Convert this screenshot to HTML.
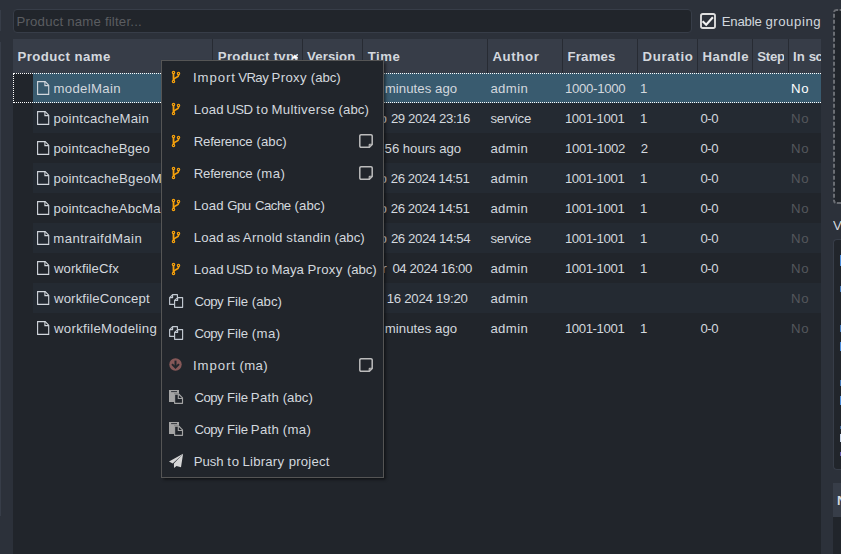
<!DOCTYPE html>
<html><head><meta charset="utf-8"><title>Loader</title>
<style>
html,body{margin:0;padding:0;overflow:hidden}
body{width:841px;height:554px;overflow:hidden;background:#2c313a;position:relative;font-family:"Liberation Sans",sans-serif;font-size:13.2px;color:#d3d8de}
div,span,svg{position:absolute;box-sizing:border-box}
.t{white-space:pre;color:#d3d8de}
.h{font-weight:700;color:#d3d8de}
.dis{color:#54575c}
.sel{color:#ffffff}
.ph{color:#5b5d61}
.m{color:#d3d8de}
#view{left:13px;top:39px;width:808px;height:515px;background:#21252b}
#hdr{left:13px;top:39px;width:808px;height:34px;background:#373d48}
.hs{top:39px;width:1px;height:34px;background:#272b33}
.ralt{left:33px;width:788px;height:30px;background:#242a32}
.rsel{left:33px;width:788px;height:30px;background:#395b6f}
#focus{left:13px;top:73px;width:808px;height:30px;border:1px dotted #ffffff;border-right:none}
#filter{left:13px;top:9px;width:679px;height:24px;background:#21252b;border:1px solid #373d48;border-radius:4px}
#menu{left:161px;top:60px;width:223px;height:418px;background:#21252b;border:1px solid #555555;box-shadow:1.5px 1.5px 3px rgba(0,0,0,.55)}
#ls1{left:0;top:10px;width:1px;height:21px;background:#373d48}
#ls2{left:0;top:42px;width:1px;height:474px;background:#373d48}
#rp2{left:833px;top:239px;width:8px;height:231px;background:#21252b;border:1px solid #373d48;border-right:none;border-radius:4px 0 0 4px}
#rp3{left:833px;top:483px;width:8px;height:34px;background:#373d48}
#rp4{left:833px;top:517px;width:8px;height:37px;background:#21252b}
.bl{left:840px;width:1px;background:#4f8fdc}
</style></head><body>
<div id="ls1"></div><div id="ls2"></div>
<div id="filter"></div>
<svg style="left:700px;top:13px" width="16" height="16" viewBox="0 0 16 16"><rect x="1" y="1" width="14" height="14" rx="1.8" fill="none" stroke="#e0e0e0" stroke-width="1.85"/><path d="M2.6 8.3L6.2 11.7 12.9 4.3" fill="none" stroke="#f2f2f2" stroke-width="2.2"/></svg>
<div id="view"></div>
<div class="rsel" style="top:73px"></div><div class="ralt" style="top:103px"></div><div class="ralt" style="top:163px"></div><div class="ralt" style="top:223px"></div><div class="ralt" style="top:283px"></div>
<div id="focus"></div>
<div id="hdr"></div><div class="hs" style="left:212px"></div><div class="hs" style="left:302px"></div><div class="hs" style="left:362px"></div><div class="hs" style="left:487px"></div><div class="hs" style="left:562px"></div><div class="hs" style="left:637px"></div><div class="hs" style="left:697px"></div><div class="hs" style="left:752px"></div><div class="hs" style="left:788px"></div>
<span class="t h" style="left:17.50px;top:39.73px;line-height:34px;letter-spacing:0.445px;">Product name</span><span class="t h" style="left:217.80px;top:39.73px;line-height:34px;letter-spacing:0.299px;width:80.20px;height:34px;overflow:hidden;">Product type</span><span class="t h" style="left:307.10px;top:39.73px;line-height:34px;letter-spacing:0.085px;">Version</span><span class="t h" style="left:367.80px;top:39.73px;line-height:34px;letter-spacing:0.464px;">Time</span><span class="t h" style="left:492.40px;top:39.73px;line-height:34px;letter-spacing:0.644px;">Author</span><span class="t h" style="left:567.50px;top:39.73px;line-height:34px;letter-spacing:0.204px;">Frames</span><span class="t h" style="left:642.40px;top:39.73px;line-height:34px;letter-spacing:0.717px;width:51.00px;height:34px;overflow:hidden;">Duration</span><span class="t h" style="left:702.50px;top:39.73px;line-height:34px;letter-spacing:0.413px;">Handle</span><span class="t h" style="left:757.30px;top:39.73px;line-height:34px;letter-spacing:-0.241px;width:26.70px;height:34px;overflow:hidden;">Step</span><span class="t h" style="left:792.90px;top:39.73px;line-height:34px;letter-spacing:0.236px;">In</span><span class="t h" style="left:808.80px;top:39.73px;line-height:34px;letter-spacing:-0.534px;width:12.20px;height:34px;overflow:hidden;">scene</span>
<svg style="left:291px;top:54px" width="8" height="5" viewBox="0 0 8 5"><path d="M0.6 4.4L3.8 0.6 7 4.4z" fill="#ffffff"/></svg>
<svg class="ic" style="left:37px;top:81px" width="13" height="15" viewBox="0 0 13 15"><g fill="none" stroke="#d3d8de" stroke-width="1.1" stroke-linejoin="miter"><path d="M0.6 0.65h7.6l3.5 3.5v9.2H0.6z"/><path d="M7.9 0.65v4h3.8"/></g></svg><svg class="ic" style="left:37px;top:111px" width="13" height="15" viewBox="0 0 13 15"><g fill="none" stroke="#d3d8de" stroke-width="1.1" stroke-linejoin="miter"><path d="M0.6 0.65h7.6l3.5 3.5v9.2H0.6z"/><path d="M7.9 0.65v4h3.8"/></g></svg><svg class="ic" style="left:37px;top:141px" width="13" height="15" viewBox="0 0 13 15"><g fill="none" stroke="#d3d8de" stroke-width="1.1" stroke-linejoin="miter"><path d="M0.6 0.65h7.6l3.5 3.5v9.2H0.6z"/><path d="M7.9 0.65v4h3.8"/></g></svg><svg class="ic" style="left:37px;top:171px" width="13" height="15" viewBox="0 0 13 15"><g fill="none" stroke="#d3d8de" stroke-width="1.1" stroke-linejoin="miter"><path d="M0.6 0.65h7.6l3.5 3.5v9.2H0.6z"/><path d="M7.9 0.65v4h3.8"/></g></svg><svg class="ic" style="left:37px;top:201px" width="13" height="15" viewBox="0 0 13 15"><g fill="none" stroke="#d3d8de" stroke-width="1.1" stroke-linejoin="miter"><path d="M0.6 0.65h7.6l3.5 3.5v9.2H0.6z"/><path d="M7.9 0.65v4h3.8"/></g></svg><svg class="ic" style="left:37px;top:231px" width="13" height="15" viewBox="0 0 13 15"><g fill="none" stroke="#d3d8de" stroke-width="1.1" stroke-linejoin="miter"><path d="M0.6 0.65h7.6l3.5 3.5v9.2H0.6z"/><path d="M7.9 0.65v4h3.8"/></g></svg><svg class="ic" style="left:37px;top:261px" width="13" height="15" viewBox="0 0 13 15"><g fill="none" stroke="#d3d8de" stroke-width="1.1" stroke-linejoin="miter"><path d="M0.6 0.65h7.6l3.5 3.5v9.2H0.6z"/><path d="M7.9 0.65v4h3.8"/></g></svg><svg class="ic" style="left:37px;top:291px" width="13" height="15" viewBox="0 0 13 15"><g fill="none" stroke="#d3d8de" stroke-width="1.1" stroke-linejoin="miter"><path d="M0.6 0.65h7.6l3.5 3.5v9.2H0.6z"/><path d="M7.9 0.65v4h3.8"/></g></svg><svg class="ic" style="left:37px;top:321px" width="13" height="15" viewBox="0 0 13 15"><g fill="none" stroke="#d3d8de" stroke-width="1.1" stroke-linejoin="miter"><path d="M0.6 0.65h7.6l3.5 3.5v9.2H0.6z"/><path d="M7.9 0.65v4h3.8"/></g></svg>
<span class="t n" style="left:53.40px;top:73.73px;line-height:30px;letter-spacing:0.342px;">modelMain</span><span class="t" style="left:384.80px;top:73.73px;line-height:30px;letter-spacing:0.049px;">minutes ago</span><span class="t" style="left:490.40px;top:73.73px;line-height:30px;letter-spacing:0.379px;">admin</span><span class="t" style="left:564.90px;top:73.73px;line-height:30px;letter-spacing:-0.291px;">1000-1000</span><span class="t" style="left:639.90px;top:73.73px;line-height:30px;">1</span><span class="t sel" style="left:790.89px;top:73.73px;line-height:30px;letter-spacing:0.9px;">No</span><span class="t n" style="left:53.40px;top:103.73px;line-height:30px;letter-spacing:0.228px;">pointcacheMain</span><span class="t" style="left:390.90px;top:103.73px;line-height:30px;letter-spacing:-0.4px;">29 2024 23:16</span><span class="t" style="left:364.01px;top:103.73px;line-height:30px;">Feb</span><span class="t" style="left:490.40px;top:103.73px;line-height:30px;letter-spacing:-0.156px;">service</span><span class="t" style="left:564.90px;top:103.73px;line-height:30px;letter-spacing:-0.404px;">1001-1001</span><span class="t" style="left:639.90px;top:103.73px;line-height:30px;">1</span><span class="t" style="left:700.59px;top:103.73px;line-height:30px;letter-spacing:-0.55px;">0-0</span><span class="t dis" style="left:790.89px;top:103.73px;line-height:30px;letter-spacing:0.9px;">No</span><span class="t n" style="left:53.40px;top:133.73px;line-height:30px;letter-spacing:0.15px;">pointcacheBgeo</span><span class="t" style="left:384.60px;top:133.73px;line-height:30px;letter-spacing:-0.041px;">56 hours ago</span><span class="t" style="left:490.40px;top:133.73px;line-height:30px;letter-spacing:0.379px;">admin</span><span class="t" style="left:564.90px;top:133.73px;line-height:30px;letter-spacing:-0.316px;">1001-1002</span><span class="t" style="left:640.70px;top:133.73px;line-height:30px;">2</span><span class="t" style="left:700.59px;top:133.73px;line-height:30px;letter-spacing:-0.55px;">0-0</span><span class="t dis" style="left:790.89px;top:133.73px;line-height:30px;letter-spacing:0.9px;">No</span><span class="t n" style="left:53.40px;top:163.73px;line-height:30px;letter-spacing:0.194px;width:107.20px;height:30px;overflow:hidden;">pointcacheBgeoMain</span><span class="t" style="left:390.80px;top:163.73px;line-height:30px;letter-spacing:-0.45px;">26 2024 14:51</span><span class="t" style="left:364.01px;top:163.73px;line-height:30px;">Feb</span><span class="t" style="left:490.40px;top:163.73px;line-height:30px;letter-spacing:0.379px;">admin</span><span class="t" style="left:564.90px;top:163.73px;line-height:30px;letter-spacing:-0.404px;">1001-1001</span><span class="t" style="left:639.90px;top:163.73px;line-height:30px;">1</span><span class="t" style="left:700.59px;top:163.73px;line-height:30px;letter-spacing:-0.55px;">0-0</span><span class="t dis" style="left:790.89px;top:163.73px;line-height:30px;letter-spacing:0.9px;">No</span><span class="t n" style="left:53.40px;top:193.73px;line-height:30px;letter-spacing:0.161px;width:107.20px;height:30px;overflow:hidden;">pointcacheAbcMain</span><span class="t" style="left:390.80px;top:193.73px;line-height:30px;letter-spacing:-0.45px;">26 2024 14:51</span><span class="t" style="left:364.01px;top:193.73px;line-height:30px;">Feb</span><span class="t" style="left:490.40px;top:193.73px;line-height:30px;letter-spacing:0.379px;">admin</span><span class="t" style="left:564.90px;top:193.73px;line-height:30px;letter-spacing:-0.404px;">1001-1001</span><span class="t" style="left:639.90px;top:193.73px;line-height:30px;">1</span><span class="t" style="left:700.59px;top:193.73px;line-height:30px;letter-spacing:-0.55px;">0-0</span><span class="t dis" style="left:790.89px;top:193.73px;line-height:30px;letter-spacing:0.9px;">No</span><span class="t n" style="left:53.30px;top:223.73px;line-height:30px;letter-spacing:0.407px;">mantraifdMain</span><span class="t" style="left:390.90px;top:223.73px;line-height:30px;letter-spacing:-0.392px;">26 2024 14:54</span><span class="t" style="left:364.01px;top:223.73px;line-height:30px;">Feb</span><span class="t" style="left:490.40px;top:223.73px;line-height:30px;letter-spacing:-0.156px;">service</span><span class="t" style="left:564.90px;top:223.73px;line-height:30px;letter-spacing:-0.404px;">1001-1001</span><span class="t" style="left:639.90px;top:223.73px;line-height:30px;">1</span><span class="t" style="left:700.59px;top:223.73px;line-height:30px;letter-spacing:-0.55px;">0-0</span><span class="t dis" style="left:790.89px;top:223.73px;line-height:30px;letter-spacing:0.9px;">No</span><span class="t n" style="left:54.00px;top:253.73px;line-height:30px;letter-spacing:0.031px;">workfileCfx</span><span class="t" style="left:392.40px;top:253.73px;line-height:30px;letter-spacing:-0.367px;">04 2024 16:00</span><span class="t" style="left:363.88px;top:253.73px;line-height:30px;">Mar</span><span class="t" style="left:490.40px;top:253.73px;line-height:30px;letter-spacing:0.379px;">admin</span><span class="t" style="left:564.90px;top:253.73px;line-height:30px;letter-spacing:-0.404px;">1001-1001</span><span class="t" style="left:639.90px;top:253.73px;line-height:30px;">1</span><span class="t" style="left:700.59px;top:253.73px;line-height:30px;letter-spacing:-0.55px;">0-0</span><span class="t dis" style="left:790.89px;top:253.73px;line-height:30px;letter-spacing:0.9px;">No</span><span class="t n" style="left:54.00px;top:283.73px;line-height:30px;letter-spacing:0.132px;">workfileConcept</span><span class="t" style="left:386.80px;top:283.73px;line-height:30px;letter-spacing:-0.275px;">16 2024 19:20</span><span class="t" style="left:490.40px;top:283.73px;line-height:30px;letter-spacing:0.379px;">admin</span><span class="t dis" style="left:790.89px;top:283.73px;line-height:30px;letter-spacing:0.9px;">No</span><span class="t n" style="left:54.00px;top:313.73px;line-height:30px;letter-spacing:0.301px;">workfileModeling</span><span class="t" style="left:384.80px;top:313.73px;line-height:30px;letter-spacing:0.049px;">minutes ago</span><span class="t" style="left:490.40px;top:313.73px;line-height:30px;letter-spacing:0.379px;">admin</span><span class="t" style="left:564.90px;top:313.73px;line-height:30px;letter-spacing:-0.404px;">1001-1001</span><span class="t" style="left:639.90px;top:313.73px;line-height:30px;">1</span><span class="t" style="left:700.59px;top:313.73px;line-height:30px;letter-spacing:-0.55px;">0-0</span><span class="t dis" style="left:790.89px;top:313.73px;line-height:30px;letter-spacing:0.9px;">No</span><span class="t ph" style="left:16.50px;top:9.73px;line-height:24px;letter-spacing:0.201px;">Product name filter...</span><span class="t" style="left:721.80px;top:9.73px;line-height:24px;letter-spacing:-0.226px;">Enable</span><span class="t" style="left:765.40px;top:9.73px;line-height:24px;letter-spacing:0.558px;">grouping</span>
<svg style="left:833px;top:9px" width="8" height="195" viewBox="833 9 8 195"><rect x="834" y="10" width="20" height="193" rx="3" fill="#21252b"/><g fill="none" stroke="#6a6d73" stroke-width="2"><path d="M834 13.8V198.6" stroke-dasharray="4 2"/><path d="M838.2 10H836.6A2.6 2.6 0 0 0 834 12"/><path d="M839.6 10H842"/><path d="M834 199.8V200.6A2.4 2.4 0 0 0 835.4 202.8"/><path d="M836.8 203H842"/></g></svg><div id="rp2"></div><div id="rp3"></div><div id="rp4"></div>
<span class="t" style="left:833px;top:214px;line-height:24px;width:8px;height:24px;overflow:hidden">V</span>
<span class="t h" style="left:837px;top:483.7px;line-height:34px;width:4px;height:34px;overflow:hidden">N</span><div class="bl" style="top:255px;height:11px"></div><div class="bl" style="top:286px;height:6px;opacity:.8"></div><div class="bl" style="top:325px;height:7px;opacity:.8"></div><div class="bl" style="top:342px;height:9px"></div><div class="bl" style="top:380px;height:6px;opacity:.8"></div><div class="bl" style="top:396px;height:9px"></div><div class="bl" style="top:426px;height:3px;opacity:.6"></div><div class="bl" style="top:434px;height:8px;background:#c8d4e6"></div><div class="bl" style="top:452px;height:4px;background:#6a5fb0"></div>
<div id="menu"></div>
<svg class="ic" style="left:170px;top:70px" width="12" height="14" viewBox="0 0 12 14"><g fill="none" stroke="#f6a10c" stroke-width="1.5"><path d="M3.5 3.2v7.4" stroke-width="1.8"/><path d="M8.5 4.4v1.1c0 2.3-4.3 1.8-4.9 4.2" stroke-width="1.7"/><circle cx="3.5" cy="2.4" r="1.15" stroke-width="1.25"/><circle cx="8.5" cy="3.5" r="1.15" stroke-width="1.25"/><circle cx="3.5" cy="11.5" r="1.15" stroke-width="1.25"/></g></svg><svg class="ic" style="left:170px;top:102px" width="12" height="14" viewBox="0 0 12 14"><g fill="none" stroke="#f6a10c" stroke-width="1.5"><path d="M3.5 3.2v7.4" stroke-width="1.8"/><path d="M8.5 4.4v1.1c0 2.3-4.3 1.8-4.9 4.2" stroke-width="1.7"/><circle cx="3.5" cy="2.4" r="1.15" stroke-width="1.25"/><circle cx="8.5" cy="3.5" r="1.15" stroke-width="1.25"/><circle cx="3.5" cy="11.5" r="1.15" stroke-width="1.25"/></g></svg><svg class="ic" style="left:170px;top:134px" width="12" height="14" viewBox="0 0 12 14"><g fill="none" stroke="#f6a10c" stroke-width="1.5"><path d="M3.5 3.2v7.4" stroke-width="1.8"/><path d="M8.5 4.4v1.1c0 2.3-4.3 1.8-4.9 4.2" stroke-width="1.7"/><circle cx="3.5" cy="2.4" r="1.15" stroke-width="1.25"/><circle cx="8.5" cy="3.5" r="1.15" stroke-width="1.25"/><circle cx="3.5" cy="11.5" r="1.15" stroke-width="1.25"/></g></svg><svg class="ic" style="left:359px;top:134px" width="15" height="15" viewBox="0 0 15 15"><g fill="none" stroke="#bcbcbc" stroke-width="1.5" stroke-linejoin="round"><path d="M2 0.8h10a1.2 1.2 0 0 1 1.2 1.2v8.4l-2.8 2.8H2a1.2 1.2 0 0 1-1.2-1.2V2a1.2 1.2 0 0 1 1.2-1.2z"/><path d="M13.2 10.2h-2.4a0.6 0.6 0 0 0-0.6 0.6v2.4" stroke-width="1.1"/></g></svg><svg class="ic" style="left:170px;top:166px" width="12" height="14" viewBox="0 0 12 14"><g fill="none" stroke="#f6a10c" stroke-width="1.5"><path d="M3.5 3.2v7.4" stroke-width="1.8"/><path d="M8.5 4.4v1.1c0 2.3-4.3 1.8-4.9 4.2" stroke-width="1.7"/><circle cx="3.5" cy="2.4" r="1.15" stroke-width="1.25"/><circle cx="8.5" cy="3.5" r="1.15" stroke-width="1.25"/><circle cx="3.5" cy="11.5" r="1.15" stroke-width="1.25"/></g></svg><svg class="ic" style="left:359px;top:166px" width="15" height="15" viewBox="0 0 15 15"><g fill="none" stroke="#bcbcbc" stroke-width="1.5" stroke-linejoin="round"><path d="M2 0.8h10a1.2 1.2 0 0 1 1.2 1.2v8.4l-2.8 2.8H2a1.2 1.2 0 0 1-1.2-1.2V2a1.2 1.2 0 0 1 1.2-1.2z"/><path d="M13.2 10.2h-2.4a0.6 0.6 0 0 0-0.6 0.6v2.4" stroke-width="1.1"/></g></svg><svg class="ic" style="left:170px;top:198px" width="12" height="14" viewBox="0 0 12 14"><g fill="none" stroke="#f6a10c" stroke-width="1.5"><path d="M3.5 3.2v7.4" stroke-width="1.8"/><path d="M8.5 4.4v1.1c0 2.3-4.3 1.8-4.9 4.2" stroke-width="1.7"/><circle cx="3.5" cy="2.4" r="1.15" stroke-width="1.25"/><circle cx="8.5" cy="3.5" r="1.15" stroke-width="1.25"/><circle cx="3.5" cy="11.5" r="1.15" stroke-width="1.25"/></g></svg><svg class="ic" style="left:170px;top:230px" width="12" height="14" viewBox="0 0 12 14"><g fill="none" stroke="#f6a10c" stroke-width="1.5"><path d="M3.5 3.2v7.4" stroke-width="1.8"/><path d="M8.5 4.4v1.1c0 2.3-4.3 1.8-4.9 4.2" stroke-width="1.7"/><circle cx="3.5" cy="2.4" r="1.15" stroke-width="1.25"/><circle cx="8.5" cy="3.5" r="1.15" stroke-width="1.25"/><circle cx="3.5" cy="11.5" r="1.15" stroke-width="1.25"/></g></svg><svg class="ic" style="left:170px;top:262px" width="12" height="14" viewBox="0 0 12 14"><g fill="none" stroke="#f6a10c" stroke-width="1.5"><path d="M3.5 3.2v7.4" stroke-width="1.8"/><path d="M8.5 4.4v1.1c0 2.3-4.3 1.8-4.9 4.2" stroke-width="1.7"/><circle cx="3.5" cy="2.4" r="1.15" stroke-width="1.25"/><circle cx="8.5" cy="3.5" r="1.15" stroke-width="1.25"/><circle cx="3.5" cy="11.5" r="1.15" stroke-width="1.25"/></g></svg><svg class="ic" style="left:169px;top:294px" width="15" height="15" viewBox="0 0 15 15"><g fill="none" stroke="#c3cad2" stroke-width="1.15" stroke-linejoin="round"><path d="M8.4 3.2V0.65H3.6L0.65 3.6v6.8h4.5"/><path d="M3.6 0.65v2.95H0.65"/><path d="M5.6 6.4L8.6 3.55h5v9.8H5.6z"/><path d="M8.6 3.55v2.85H5.6"/></g></svg><svg class="ic" style="left:169px;top:326px" width="15" height="15" viewBox="0 0 15 15"><g fill="none" stroke="#c3cad2" stroke-width="1.15" stroke-linejoin="round"><path d="M8.4 3.2V0.65H3.6L0.65 3.6v6.8h4.5"/><path d="M3.6 0.65v2.95H0.65"/><path d="M5.6 6.4L8.6 3.55h5v9.8H5.6z"/><path d="M8.6 3.55v2.85H5.6"/></g></svg><svg class="ic" style="left:169px;top:358px" width="13" height="13" viewBox="-6.5 -6.5 13 13"><circle cx="0" cy="0" r="6.2" fill="#865858"/><g fill="none" stroke="#21252b" stroke-width="2"><path d="M0-3.9V2.4"/><path d="M-3.5-0.4L0 3.1 3.5-0.4"/></g></svg><svg class="ic" style="left:359px;top:358px" width="15" height="15" viewBox="0 0 15 15"><g fill="none" stroke="#bcbcbc" stroke-width="1.5" stroke-linejoin="round"><path d="M2 0.8h10a1.2 1.2 0 0 1 1.2 1.2v8.4l-2.8 2.8H2a1.2 1.2 0 0 1-1.2-1.2V2a1.2 1.2 0 0 1 1.2-1.2z"/><path d="M13.2 10.2h-2.4a0.6 0.6 0 0 0-0.6 0.6v2.4" stroke-width="1.1"/></g></svg><svg class="ic" style="left:169px;top:390px" width="15" height="15" viewBox="0 0 15 15"><path d="M0 0h10v3.7H5v8.3H0z" fill="#a4a4a4"/><rect x="2.1" y="1.2" width="5.9" height="0.9" fill="#21252b"/><g fill="none" stroke="#a4a4a4" stroke-width="1.15" stroke-linejoin="round"><path d="M5.6 4.25h4.3l3.6 3.6v5.45H5.6z"/><path d="M9.3 4.25v4.2h4.2"/></g></svg><svg class="ic" style="left:169px;top:422px" width="15" height="15" viewBox="0 0 15 15"><path d="M0 0h10v3.7H5v8.3H0z" fill="#a4a4a4"/><rect x="2.1" y="1.2" width="5.9" height="0.9" fill="#21252b"/><g fill="none" stroke="#a4a4a4" stroke-width="1.15" stroke-linejoin="round"><path d="M5.6 4.25h4.3l3.6 3.6v5.45H5.6z"/><path d="M9.3 4.25v4.2h4.2"/></g></svg><svg class="ic" style="left:169px;top:453px" width="15" height="16" viewBox="0 0 15 16"><path d="M14.1 0.8L-0.2 8.5l3.9 2.1L11.6 3.3z" fill="#d6d6d6"/><path d="M14.1 0.8L4.9 10.6l0.1 4.5 2.5-2.1 4.5 1.2z" fill="#d6d6d6"/></svg>
<span class="t m" style="left:193.00px;top:61.73px;line-height:32px;letter-spacing:0.898px;">Import</span><span class="t m" style="left:238.15px;top:61.73px;line-height:32px;letter-spacing:-0.55px;">VRay</span><span class="t m" style="left:271.50px;top:61.73px;line-height:32px;letter-spacing:0.346px;">Proxy</span><span class="t m" style="left:310.80px;top:61.73px;line-height:32px;letter-spacing:-0.038px;">(abc)</span><span class="t m" style="left:193.80px;top:93.73px;line-height:32px;letter-spacing:0.166px;">Load</span><span class="t m" style="left:226.34px;top:93.73px;line-height:32px;letter-spacing:-0.55px;">USD</span><span class="t m" style="left:256.27px;top:93.73px;line-height:32px;letter-spacing:0.9px;">to</span><span class="t m" style="left:271.50px;top:93.73px;line-height:32px;letter-spacing:0.349px;">Multiverse</span><span class="t m" style="left:338.60px;top:93.73px;line-height:32px;letter-spacing:0.037px;">(abc)</span><span class="t m" style="left:193.80px;top:125.73px;line-height:32px;letter-spacing:-0.251px;">Reference</span><span class="t m" style="left:256.60px;top:125.73px;line-height:32px;letter-spacing:0.012px;">(abc)</span><span class="t m" style="left:193.80px;top:157.73px;line-height:32px;letter-spacing:-0.251px;">Reference</span><span class="t m" style="left:256.60px;top:157.73px;line-height:32px;letter-spacing:0.363px;">(ma)</span><span class="t m" style="left:193.80px;top:189.73px;line-height:32px;letter-spacing:0.166px;">Load</span><span class="t m" style="left:227.35px;top:189.73px;line-height:32px;letter-spacing:-0.55px;">Gpu</span><span class="t m" style="left:255.11px;top:189.73px;line-height:32px;letter-spacing:-0.55px;">Cache</span><span class="t m" style="left:294.60px;top:189.73px;line-height:32px;letter-spacing:0.037px;">(abc)</span><span class="t m" style="left:193.80px;top:221.73px;line-height:32px;letter-spacing:0.166px;">Load</span><span class="t m" style="left:226.66px;top:221.73px;line-height:32px;letter-spacing:-0.55px;">as</span><span class="t m" style="left:242.80px;top:221.73px;line-height:32px;letter-spacing:0.283px;">Arnold</span><span class="t m" style="left:286.30px;top:221.73px;line-height:32px;letter-spacing:0.302px;">standin</span><span class="t m" style="left:334.60px;top:221.73px;line-height:32px;letter-spacing:0.012px;">(abc)</span><span class="t m" style="left:193.80px;top:253.73px;line-height:32px;letter-spacing:0.166px;">Load</span><span class="t m" style="left:226.34px;top:253.73px;line-height:32px;letter-spacing:-0.55px;">USD</span><span class="t m" style="left:256.27px;top:253.73px;line-height:32px;letter-spacing:0.9px;">to</span><span class="t m" style="left:271.50px;top:253.73px;line-height:32px;letter-spacing:0.062px;">Maya</span><span class="t m" style="left:307.40px;top:253.73px;line-height:32px;letter-spacing:0.296px;">Proxy</span><span class="t m" style="left:347.00px;top:253.73px;line-height:32px;letter-spacing:-0.113px;">(abc)</span><span class="t m" style="left:194.53px;top:285.73px;line-height:32px;letter-spacing:-0.55px;">Copy</span><span class="t m" style="left:227.10px;top:285.73px;line-height:32px;letter-spacing:-0.072px;">File</span><span class="t m" style="left:251.80px;top:285.73px;line-height:32px;letter-spacing:0.037px;">(abc)</span><span class="t m" style="left:194.53px;top:317.73px;line-height:32px;letter-spacing:-0.55px;">Copy</span><span class="t m" style="left:227.10px;top:317.73px;line-height:32px;letter-spacing:-0.072px;">File</span><span class="t m" style="left:251.80px;top:317.73px;line-height:32px;letter-spacing:0.396px;">(ma)</span><span class="t m" style="left:193.00px;top:349.73px;line-height:32px;letter-spacing:0.898px;">Import</span><span class="t m" style="left:239.50px;top:349.73px;line-height:32px;letter-spacing:0.363px;">(ma)</span><span class="t m" style="left:194.53px;top:381.73px;line-height:32px;letter-spacing:-0.55px;">Copy</span><span class="t m" style="left:227.10px;top:381.73px;line-height:32px;letter-spacing:-0.072px;">File</span><span class="t m" style="left:250.80px;top:381.73px;line-height:32px;letter-spacing:0.302px;">Path</span><span class="t m" style="left:282.70px;top:381.73px;line-height:32px;letter-spacing:0.037px;">(abc)</span><span class="t m" style="left:194.53px;top:413.73px;line-height:32px;letter-spacing:-0.55px;">Copy</span><span class="t m" style="left:227.10px;top:413.73px;line-height:32px;letter-spacing:-0.072px;">File</span><span class="t m" style="left:250.80px;top:413.73px;line-height:32px;letter-spacing:0.302px;">Path</span><span class="t m" style="left:282.70px;top:413.73px;line-height:32px;letter-spacing:0.396px;">(ma)</span><span class="t m" style="left:193.80px;top:445.73px;line-height:32px;letter-spacing:-0.075px;">Push</span><span class="t m" style="left:227.27px;top:445.73px;line-height:32px;letter-spacing:0.9px;">to</span><span class="t m" style="left:242.50px;top:445.73px;line-height:32px;letter-spacing:0.197px;">Library</span><span class="t m" style="left:288.70px;top:445.73px;line-height:32px;letter-spacing:0.197px;">project</span>
</body></html>
